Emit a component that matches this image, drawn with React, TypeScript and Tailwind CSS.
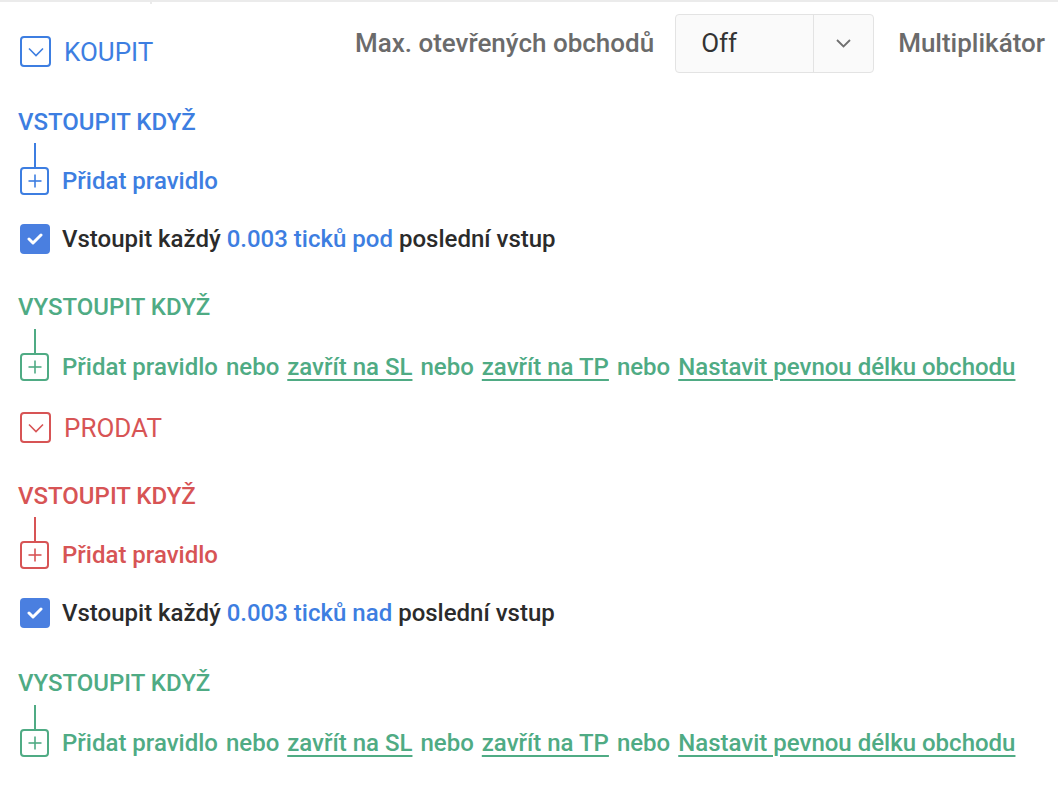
import React from 'react';

type Tone = {
  text: string;
  border: string;
  line: string;
};

const blue: Tone = { text: 'text-[#3d7ee1]', border: 'border-[#3d7ee1]', line: 'bg-[#3d7ee1]' };
const green: Tone = { text: 'text-[#4fab84]', border: 'border-[#4fab84]', line: 'bg-[#4fab84]' };
const red: Tone = { text: 'text-[#d75455]', border: 'border-[#d75455]', line: 'bg-[#d75455]' };

function ToggleBox({ tone, label }: { tone: Tone; label: string }) {
  return (
    <div className="flex items-center gap-[13px]">
      <div className={`flex h-[31px] w-[31px] items-center justify-center rounded-[4px] border-2 ${tone.border} ${tone.text}`}>
        <svg width="16" height="10" viewBox="0 0 16 10" fill="none" stroke="currentColor" strokeWidth="1.6">
          <polyline points="1,1.5 8,8.5 15,1.5" />
        </svg>
      </div>
      <span className={`text-[26px] leading-none ${tone.text}`}>{label}</span>
    </div>
  );
}

function SectionTitle({ tone, children }: { tone: Tone; children: React.ReactNode }) {
  return <div className={`-ml-[2px] text-[24px] font-medium leading-[24px] ${tone.text}`}>{children}</div>;
}

function AddRule({ tone, exit }: { tone: Tone; exit?: boolean }) {
  return (
    <div className="flex flex-col">
      <div className={`ml-[14px] h-[24px] w-[2px] ${tone.line}`} />
      <div className={`flex h-[28px] items-center gap-[13px] text-[24px] font-medium leading-[28px] ${tone.text}`}>
        <div className={`flex h-[28px] w-[29px] items-center justify-center rounded-[4px] border-2 ${tone.border}`}>
          <svg width="14" height="14" viewBox="0 0 14 14" fill="none" stroke="currentColor" strokeWidth="1.6">
            <line x1="7" y1="0.5" x2="7" y2="13.5" />
            <line x1="0.5" y1="7" x2="13.5" y2="7" />
          </svg>
        </div>
        <div className="flex items-center gap-[8px] whitespace-nowrap">
          <span>Přidat pravidlo</span>
          {exit && (
            <>
              <span>nebo</span>
              <span className="underline decoration-[1.5px] underline-offset-[4px]">zavřít na SL</span>
              <span>nebo</span>
              <span className="underline decoration-[1.5px] underline-offset-[4px]">zavřít na TP</span>
              <span>nebo</span>
              <span className="underline decoration-[1.5px] underline-offset-[4px]">Nastavit pevnou délku obchodu</span>
            </>
          )}
        </div>
      </div>
    </div>
  );
}

function EntryEvery({ dir }: { dir: string }) {
  return (
    <div className="flex h-[30px] items-center gap-[12px]">
      <div className="flex h-[30px] w-[30px] items-center justify-center rounded-[4px] bg-[#4a7fe0]">
        <svg width="16" height="12" viewBox="0 0 16 12" fill="none" stroke="white" strokeWidth="3" strokeLinecap="round" strokeLinejoin="round">
          <polyline points="2,6 6,10 14,2" />
        </svg>
      </div>
      <span className="whitespace-nowrap text-[24px] font-medium leading-[28px] text-[#2b2b2b]">
        Vstoupit každý <span className="text-[#3d7ee1]">0.003 ticků {dir}</span> poslední vstup
      </span>
    </div>
  );
}

function Side({ tone, dir, first }: { tone: Tone; dir: string; first?: boolean }) {
  return (
    <div className="flex flex-col">
      <div className={first ? 'mt-[37px]' : 'mt-[41px]'}>
        <SectionTitle tone={tone}>VSTOUPIT KDYŽ</SectionTitle>
      </div>
      <div className="mt-[9px]">
        <AddRule tone={tone} />
      </div>
      <div className="mt-[29px]">
        <EntryEvery dir={dir} />
      </div>
      <div className={first ? 'mt-[41px]' : 'mt-[43px]'}>
        <SectionTitle tone={green}>VYSTOUPIT KDYŽ</SectionTitle>
      </div>
      <div className="mt-[10px]">
        <AddRule tone={green} exit />
      </div>
    </div>
  );
}

export default function App() {
  return (
    <div className="min-h-screen w-[1058px] bg-white font-['Roboto',sans-serif]">
      <div className="relative h-[2px] w-full bg-[#ebebeb]">
        <div className="absolute left-[150px] top-0 h-[4px] w-[2px] bg-[#ebebeb]" />
      </div>
      <div className="pl-5 pr-[13px] pt-[12px]">
        <div className="flex items-start justify-between">
          <div className="mt-[22px]">
            <ToggleBox tone={blue} label="KOUPIT" />
          </div>
          <div className="flex items-center">
            <span className="whitespace-nowrap text-[26px] font-medium text-[#6b6b6b]">Max. otevřených obchodů</span>
            <div className="ml-[21px] flex h-[59px] w-[199px] rounded-[4px] border border-[#e3e3e3] bg-[#fafafa]">
              <div className="flex flex-1 items-center pl-[25px] text-[26px] text-[#333333]">Off</div>
              <div className="flex w-[60px] items-center justify-center border-l border-[#e3e3e3] text-[#707070]">
                <svg width="15" height="9" viewBox="0 0 15 9" fill="none" stroke="currentColor" strokeWidth="1.8">
                  <polyline points="1,1 7.5,7.5 14,1" />
                </svg>
              </div>
            </div>
            <span className="ml-[24px] whitespace-nowrap text-[26px] font-medium text-[#6b6b6b]">Multiplikátor</span>
          </div>
        </div>
        <Side tone={blue} dir="pod" first />
        <div className="mt-[31px]">
          <ToggleBox tone={red} label="PRODAT" />
        </div>
        <Side tone={red} dir="nad" />
      </div>
    </div>
  );
}
